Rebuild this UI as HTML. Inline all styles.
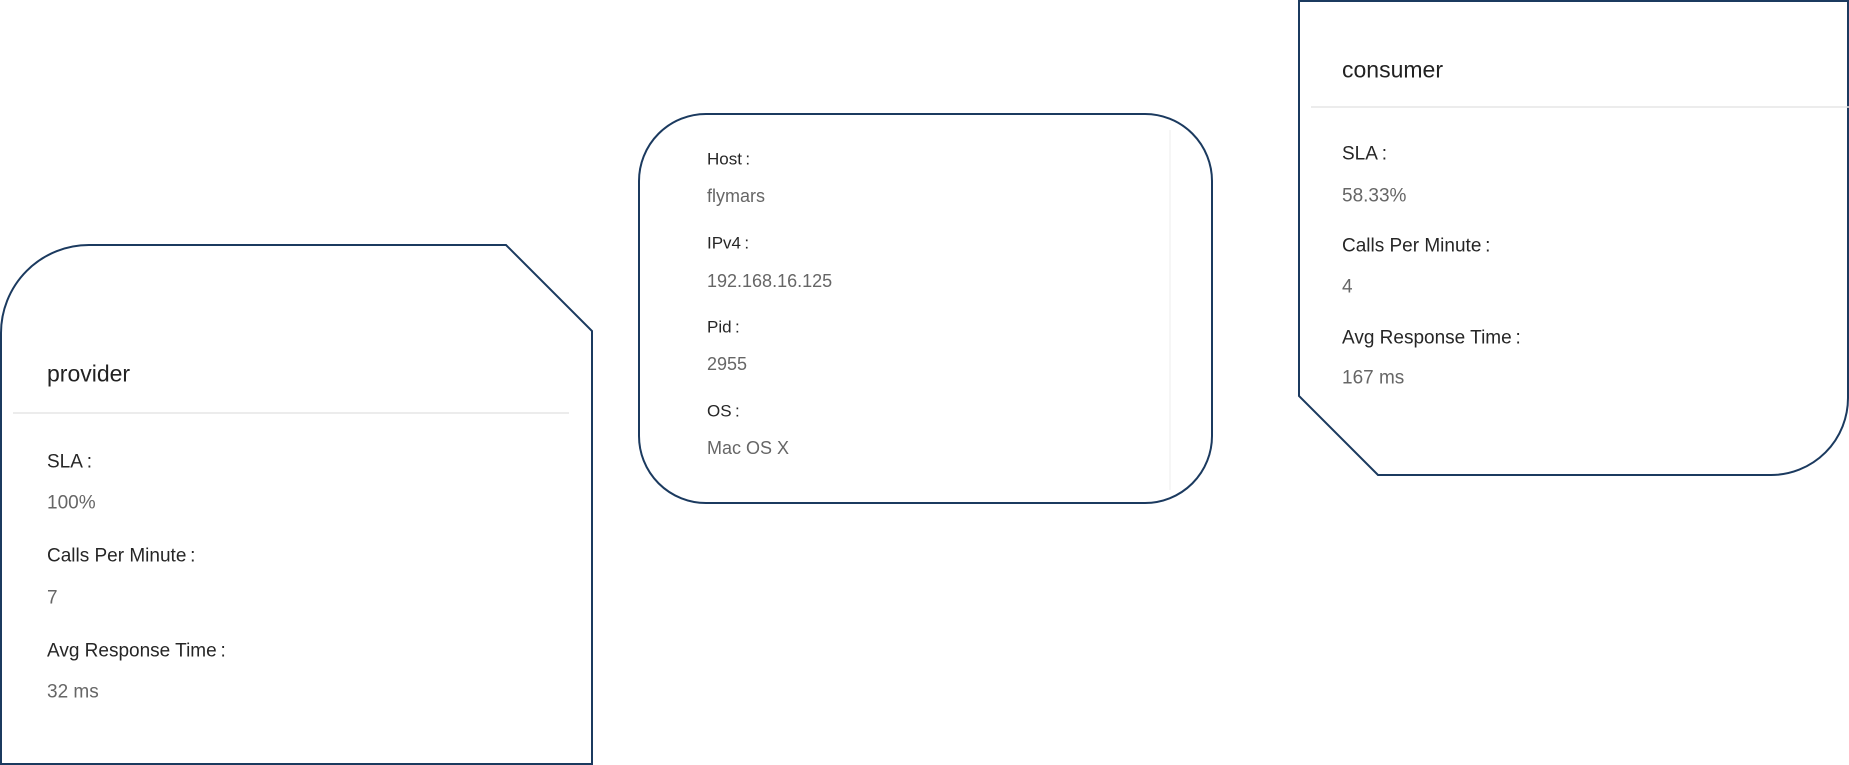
<!DOCTYPE html>
<html><head><meta charset="utf-8"><style>
html,body{margin:0;padding:0;background:#fff;width:1849px;height:765px;overflow:hidden;position:relative;font-family:"Liberation Sans",sans-serif}
svg{position:absolute;left:0;top:0}
.t{position:absolute;white-space:nowrap;line-height:1;transform:translateY(-50%)}
.h{font-size:23px;color:#222}
.l{font-size:19px;color:#262626}
.v{font-size:19px;color:#666}
.ls{font-size:17px;color:#262626}
.vs{font-size:18px;color:#666}
</style></head><body>
<svg width="1849" height="765" viewBox="0 0 1849 765">
<g fill="none" stroke="#1b3a5f" stroke-width="2">
<path d="M1 764 V333 A88 88 0 0 1 89 245 H506 L592 331 V764 Z"/>
<rect x="639" y="114" width="573" height="389" rx="67" ry="67"/>
<path d="M1299 1 H1848 V398 A77 77 0 0 1 1771 475 H1378 L1299 396 Z"/>
</g>
<line x1="13" y1="413" x2="569" y2="413" stroke="#e6e6e6" stroke-width="1.5"/>
<line x1="1311" y1="107" x2="1849" y2="107" stroke="#e6e6e6" stroke-width="1.5"/>
<line x1="1170" y1="130" x2="1170" y2="490" stroke="#ededed" stroke-width="1"/>
</svg>
<div class="t h" style="left:47px;top:374px">provider</div>
<div class="t l" style="left:47px;top:462px">SLA&thinsp;:</div>
<div class="t v" style="left:47px;top:503px">100%</div>
<div class="t l" style="left:47px;top:556px">Calls Per Minute&thinsp;:</div>
<div class="t v" style="left:47px;top:598px">7</div>
<div class="t l" style="left:47px;top:651px">Avg Response Time&thinsp;:</div>
<div class="t v" style="left:47px;top:692px">32 ms</div>

<div class="t ls" style="left:707px;top:159px">Host&thinsp;:</div>
<div class="t vs" style="left:707px;top:196px">flymars</div>
<div class="t ls" style="left:707px;top:243px">IPv4&thinsp;:</div>
<div class="t vs" style="left:707px;top:281px">192.168.16.125</div>
<div class="t ls" style="left:707px;top:327px">Pid&thinsp;:</div>
<div class="t vs" style="left:707px;top:364px">2955</div>
<div class="t ls" style="left:707px;top:411px">OS&thinsp;:</div>
<div class="t vs" style="left:707px;top:448px">Mac OS X</div>

<div class="t h" style="left:1342px;top:70px">consumer</div>
<div class="t l" style="left:1342px;top:154px">SLA&thinsp;:</div>
<div class="t v" style="left:1342px;top:196px">58.33%</div>
<div class="t l" style="left:1342px;top:246px">Calls Per Minute&thinsp;:</div>
<div class="t v" style="left:1342px;top:287px">4</div>
<div class="t l" style="left:1342px;top:338px">Avg Response Time&thinsp;:</div>
<div class="t v" style="left:1342px;top:378px">167 ms</div>
</body></html>
